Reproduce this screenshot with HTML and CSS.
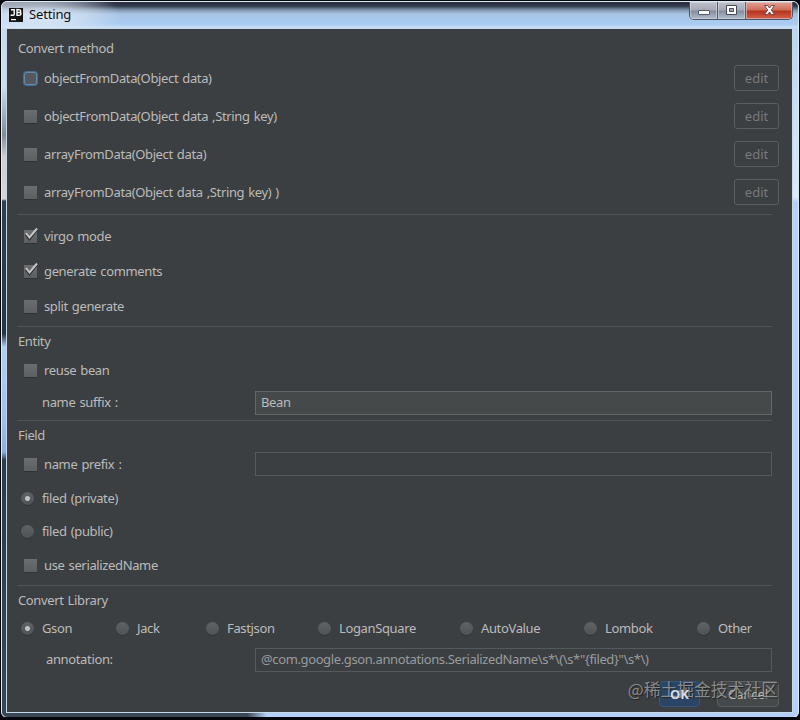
FILE: index.html
```html
<!DOCTYPE html>
<html lang="en">
<head>
<meta charset="utf-8">
<title>Setting</title>
<link rel="stylesheet" href="styles.css">
</head>
<body>
<div class="window">
  <div class="titlebar">
    <svg class="logo" viewBox="0 0 14 14"><rect width="14" height="14" fill="#151515"/><path d="M2 1.800h3.200v4.400q0 1-1.200 1H1.600M8 1.600v5.800h2.400q1.600-.2 1.600-1.600 0-1.200-1.300-1.300 1.100-.2 1-1.400-.1-1.300-1.500-1.300zM8 4.500h2.600" fill="none" stroke="#fff" stroke-width="1.4"/><path d="M2 11.600h5" stroke="#fff" stroke-width="1.3"/></svg>
    <span class="title">Setting</span>
    <div class="controls">
      <span class="ctl min"><svg width="27" height="18"><rect x="8.500" y="8.500" width="11" height="4" rx=".5" fill="#fff" stroke="#535766"/></svg></span>
      <span class="ctl max"><svg width="27" height="18"><path fill-rule="evenodd" d="M8.500 3.500h10v9h-10zM11.500 6.500h4v3h-4z" fill="#fff" stroke="#454b5d"/></svg></span>
      <span class="ctl close"><svg width="46" height="18"><path d="M18.500 3.500h3l2 2.500 2-2.500h3l-3.200 4.500 3.200 4.500h-3l-2-2.500-2 2.500h-3l3.200-4.500z" fill="#fff" stroke="#6b4650"/></svg></span>
    </div>
  </div>
  <main class="panel">
    <h2>Convert method</h2>
    <div class="row method"><i class="check focus"></i><span class="t">objectFromData(Object data)</span><button class="edit">edit</button></div>
    <div class="row method"><i class="check"></i><span class="t">objectFromData(Object data ,String key)</span><button class="edit">edit</button></div>
    <div class="row method"><i class="check"></i><span class="t">arrayFromData(Object data)</span><button class="edit">edit</button></div>
    <div class="row method"><i class="check"></i><span class="t">arrayFromData(Object data ,String key) )</span><button class="edit">edit</button></div>
    <hr class="first">
    <div class="row"><i class="check"><svg class="tick" viewBox="0 0 16 15"><path d="M3 7.500l3.500 4.500L14 2.500" class="shade"/><path d="M3 6l3.500 4.500L14 1.500"/></svg></i><span class="t">virgo mode</span></div>
    <div class="row"><i class="check"><svg class="tick" viewBox="0 0 16 15"><path d="M3 7.500l3.500 4.500L14 2.500" class="shade"/><path d="M3 6l3.500 4.500L14 1.500"/></svg></i><span class="t">generate comments</span></div>
    <div class="row"><i class="check"></i><span class="t">split generate</span></div>
    <hr>
    <h2>Entity</h2>
    <div class="row head-row"><i class="check"></i><span class="t">reuse bean</span></div>
    <div class="row suffix"><span class="t">name suffix :</span><span class="field filled">Bean</span></div>
    <hr>
    <h2>Field</h2>
    <div class="row head-row"><i class="check"></i><span class="t">name prefix :</span><span class="field empty"></span></div>
    <div class="row radio-row"><i class="radio on"></i><span class="t">filed (private)</span></div>
    <div class="row radio-row"><i class="radio"></i><span class="t">filed (public)</span></div>
    <div class="row"><i class="check"></i><span class="t">use serializedName</span></div>
    <hr>
    <h2>Convert Library</h2>
    <div class="row libs head-row">
      <span class="lib"><i class="radio on"></i><span class="t">Gson</span></span>
      <span class="lib"><i class="radio"></i><span class="t">Jack</span></span>
      <span class="lib"><i class="radio"></i><span class="t">Fastjson</span></span>
      <span class="lib"><i class="radio"></i><span class="t">LoganSquare</span></span>
      <span class="lib"><i class="radio"></i><span class="t">AutoValue</span></span>
      <span class="lib"><i class="radio"></i><span class="t">Lombok</span></span>
      <span class="lib"><i class="radio"></i><span class="t">Other</span></span>
    </div>
    <div class="row annot"><span class="t">annotation:</span><span class="field dim">@com.google.gson.annotations.SerializedName\s*\(\s*"{filed}"\s*\)</span></div>
    <footer><button class="ok"><span>OK</span></button><button class="cancel">Cancel</button></footer>
  </main>
  <div class="watermark">@稀土掘金技术社区</div>
</div>
</body>
</html>
```
FILE: styles.css
```css
* { box-sizing: border-box; }
body { margin: 0; background: #05070d; font: 13px/20px "Noto Sans", "Noto Sans CJK SC", sans-serif; letter-spacing: -.36px; word-spacing: 1px; color: #bbb; }
.window {
  position: relative; width: 798px; height: 717px; margin: 0 1px; padding: 0 6px 0 5px; top: 1px;
  border: 1px solid #d9edf6; border-radius: 6px;
  background:
    linear-gradient(90deg, #3a4755 0 245px, #b5d0f8 265px) 0 100% / 100% 6px no-repeat,
    linear-gradient(#c6d9ef, #cfdeea 85px, #a9b6c4 108px, #838a94 133px, #d0cdcf 155px, #d8d3d3 197px, #35404d 199px, #2b3541 332px, #afcff8 345px, #9cbfee 420px, #8baee0 450px, #303b4a 458px, #3b4754) 0 0 / 6px 100% no-repeat,
    linear-gradient(#b4d0f4, #dceaf7 195px, #b5d1fa 200px) 100% 0 / 9px 100% no-repeat, #b4d0f4;
}
.titlebar {
  display: flex; height: 26px; margin: 0 -6px 0 -5px; padding-left: 7px; border-radius: 5px 5px 0 0;
  background: radial-gradient(ellipse 75px 26px at 45px 14px, #e1ebf7d0, #d2e2f500), linear-gradient(90deg, #dbe4ef90 0, #dbe4ef00 120px), linear-gradient(#292d3e 0, #30384a 4px, #7d95ad 8px, #a7c4e4 12px, #aaccf2 22px, #c9e1f6);
}
.logo { width: 14px; height: 14px; margin-top: 6px; }
.title { margin: 2px 0 0 6px; color: #111; letter-spacing: -.15px; }
.controls { display: flex; margin-left: auto; margin-right: 5px; height: 18px; border: 1px solid #4c5469; border-top: 0; border-radius: 0 0 5px 5px; overflow: hidden; }
.ctl { background: linear-gradient(#c0c2c9, #a4a9b5 8px, #868d9c 9px, #b0bccd); border-right: 1px solid #555d70; box-shadow: inset 0 0 0 1px #d5dae390; }
.ctl svg { display: block; }
.ctl.close { background: linear-gradient(#e3a294, #cf6d59 8px, #b5341e 9px, #d46149); border: 0; }
.panel { width: 787px; height: 685px; padding: 10px 13px 0 10px; background: #3c3f41; border: 1px solid #c4d8e7; margin: 0 -1px; }
h2 { margin: 0; padding-left: 1px; height: 20px; font: inherit; line-height: 18px; }
hr { width: 755px; height: 1px; margin: 2px 0 5px; border: 0; background: #515456; }
hr.first { margin: 3px 0 4px; }
.row { display: flex; align-items: center; height: 35px; padding-left: 7px; }
.method { height: 38px; }
.head-row { margin-top: 1px; }
.check { position: relative; width: 13px; height: 13px; margin-right: 7px; background: linear-gradient(#6b6d6f, #5c5f61); box-shadow: 0 1px #303335; }
.check.focus { border: 1px solid #6589ad; border-radius: 3px; box-shadow: 0 0 0 1px #466d94; background: #55595d; }
.tick { position: absolute; left: -1px; top: -3px; width: 16px; height: 15px; fill: none; stroke: #c5c7c8; stroke-width: 2; }
.tick .shade { stroke: #303234; stroke-width: 2.5; }
.t { white-space: pre; padding-bottom: 2px; }
.method .t { padding-bottom: 0; }
.edit { width: 45px; height: 26px; margin-left: auto; padding: 0; font: inherit; color: #777a7c; background: none; border: 1px solid #5a5d5f; border-radius: 3px; }
.suffix { height: 30px; padding-left: 25px; }
.field { width: 517px; height: 24px; padding-left: 5px; line-height: 20px; border: 1px solid #55595b; white-space: pre; margin-left: auto; margin-right: 7px; }
.empty { margin-bottom: 1px; }
.filled { background: #45494a; border-color: #646768; }
.dim { color: #999c9e; letter-spacing: -.38px; }
.radio-row { height: 33px; padding-left: 4px; }
.radio { width: 13px; height: 13px; margin-right: 8px; border-radius: 50%; background: linear-gradient(#606365, #505355); box-shadow: 0 1px #303335; }
.radio.on { background: radial-gradient(circle, #c0c2c3 0 2px, #54575900 3px), linear-gradient(#606365, #505355); }
.libs { height: 33px; display: grid; grid-template-columns: 95px 90px 112px 142px 124px 113px 70px; padding-left: 4px; }
.lib { display: flex; align-items: center; }
.annot { height: 29px; padding-left: 29px; }
footer { display: flex; justify-content: flex-end; gap: 17px; padding-top: 7px; }
footer button { height: 26px; padding: 0; font: inherit; color: #bbb; border-radius: 4px; border: 1px solid #5b5e60; background: #45494b; }
footer .ok { width: 41px; font-weight: bold; color: #d4dae1; background: #2b4567; border-color: #37547a; }
.ok span { position: relative; z-index: 2; }
footer .cancel { width: 62px; letter-spacing: -.1px; }
.watermark { position: absolute; z-index: 1; right: 20px; top: 675px; font: 16.8px/24px "Noto Sans CJK SC", sans-serif; letter-spacing: 0; color: #a9acaebb; text-shadow: 1px 1px 1px #222; white-space: nowrap; }
```
